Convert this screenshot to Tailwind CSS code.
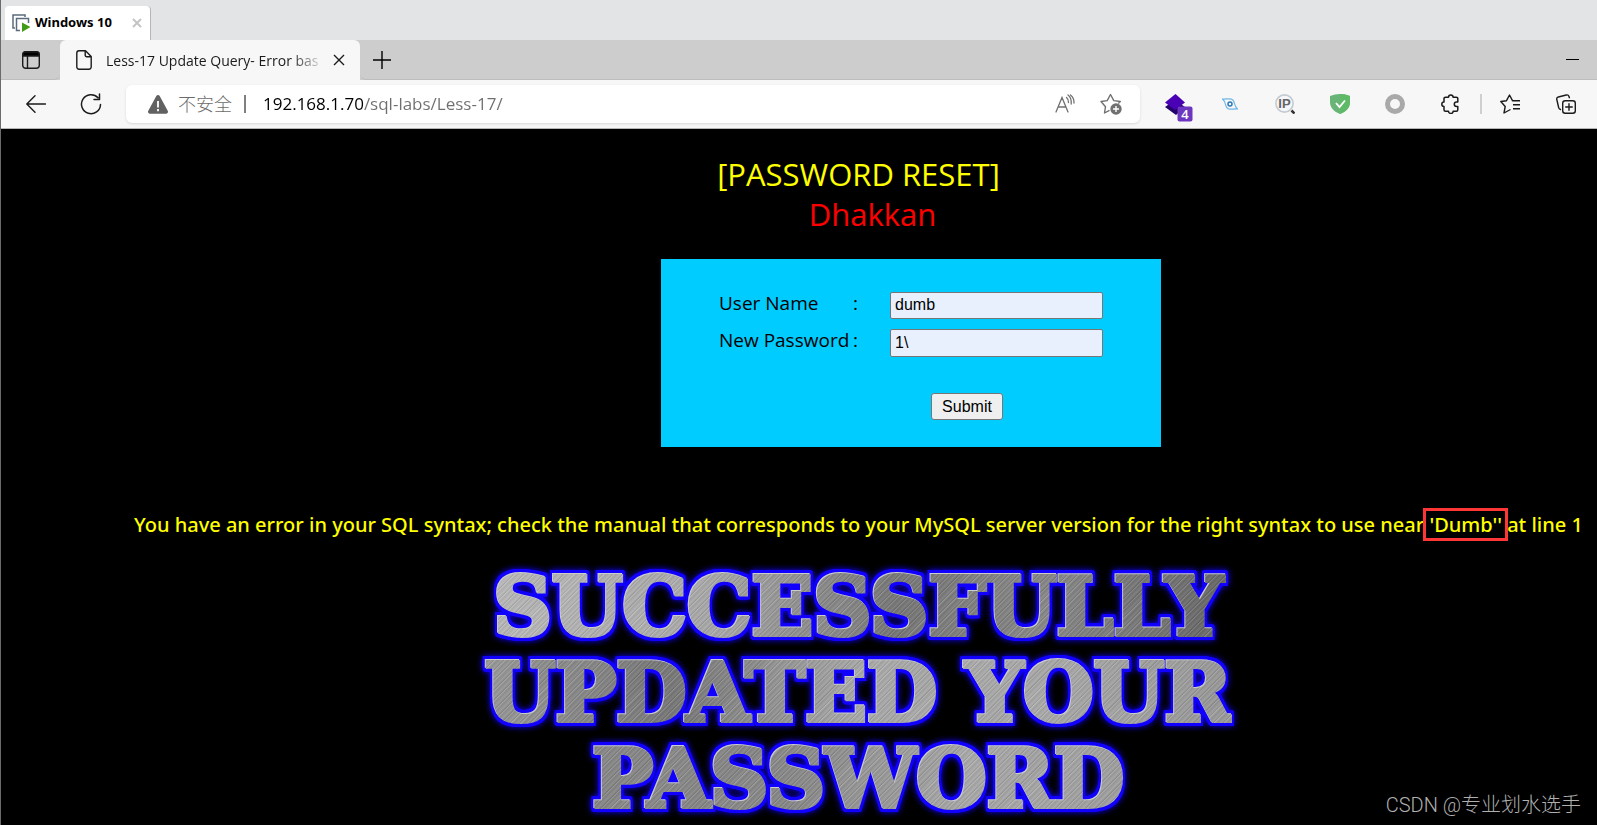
<!DOCTYPE html>
<html lang="zh-CN">
<head>
    <meta charset="UTF-8">
    <meta name="viewport" content="width=device-width, initial-scale=1.0">
    <title>Less-17 Update Query- Error based</title>
    <script src="https://cdn.jsdelivr.net/npm/@tailwindcss/browser@4"></script>
</head>
<body class="relative min-h-screen overflow-hidden border-l border-[#6b6b6b] bg-black font-['Open_Sans','Noto_Sans_CJK_SC',sans-serif]">
    <!-- VM tabs -->
    <div class="flex h-10 items-end bg-[#e3e4e6] pl-1">
        <div class="flex h-[34px] w-[146px] items-center rounded-t border-r border-[#b5b5b5] bg-white pl-[7px] pr-2">
            <svg class="h-[18px] w-[18px]" viewBox="0 0 18 18" fill="none" stroke="#5b6b7b" stroke-width="1.5">
                <path d="M3 14H1V1h12v2" />
                <path d="M8 16.500H4.500V4.500h12V9" />
                <path d="M10 8.500v9.500l8.500-5z" fill="#3f9c14" stroke="none" />
            </svg>
            <span class="ml-[5px] whitespace-nowrap font-['Noto_Sans',sans-serif] text-[13px] font-bold">Windows 10</span>
            <button class="ml-auto" aria-label="Close">
                <svg class="h-[10px] w-[10px]" viewBox="0 0 10 10" stroke="#c4c4c4" stroke-width="2"><path d="M1 1l8 8M9 1l-8 8" /></svg>
            </button>
        </div>
    </div>

    <!-- Browser tabs -->
    <div class="flex h-10 bg-[#cdcdcd]">
        <button class="flex w-[59px] items-center justify-center rounded-br-md border-b border-[#bdbdbd]" aria-label="Tab actions">
            <svg class="h-[18px] w-[18px]" viewBox="0 0 18 18" fill="none" stroke="#1b1b1b" stroke-width="1.4">
                <rect x="0.700" y="0.700" width="16.600" height="16.600" rx="3" />
                <path d="M1 3a2 2 0 012-2h12a2 2 0 012 2v2H1z" fill="#000" />
                <path d="M5.500 5v12" />
            </svg>
        </button>
        <div class="flex w-[300px] items-center rounded-t-md bg-[#f7f7f7] pl-4 pr-[15px]">
            <svg class="h-5 w-4" viewBox="0 0 16 20" fill="none" stroke="#1b1b1b" stroke-width="1.400" stroke-linejoin="round">
                <path d="M3 .8h6.500l5.700 5.700V17a2.200 2.200 0 01-2.200 2.200H3A2.200 2.200 0 01.800 17V3A2.200 2.200 0 013 .8z" />
                <path d="M9.200 1v4.300a1.500 1.500 0 001.500 1.500H15" />
            </svg>
            <span class="ml-[14px] whitespace-nowrap text-[14px] text-[#1b1b1b] [mask-image:linear-gradient(90deg,#000_185px,#0003_212px)]">Less-17 Update Query- Error bas</span>
            <button class="ml-auto" aria-label="Close tab">
                <svg class="h-3 w-3" viewBox="0 0 12 12" stroke="#1b1b1b" stroke-width="1.400"><path d="M1 1l10 10M11 1L1 11" /></svg>
            </button>
        </div>
        <div class="flex flex-1 items-center rounded-bl-md border-b border-[#bdbdbd] pl-[13px] pr-[18px]">
            <button aria-label="New tab">
                <svg class="h-[18px] w-[18px]" viewBox="0 0 18 18" stroke="#000" stroke-width="1.400"><path d="M9 0v18M0 9h18" /></svg>
            </button>
            <button class="ml-auto" aria-label="Minimize">
                <svg class="h-3 w-[13px]" viewBox="0 0 13 12" stroke="#000"><path d="M0 5.500h13" /></svg>
            </button>
        </div>
    </div>

    <!-- Toolbar -->
    <div class="flex h-[49px] items-center border-b border-[#b5b5b5] bg-[#f7f7f7] pr-1">
        <button class="ml-[25px]" aria-label="Back">
            <svg class="h-[18px] w-5" viewBox="0 0 20 18" fill="none" stroke="#1b1b1b" stroke-width="1.400" stroke-linecap="round" stroke-linejoin="round"><path d="M19.500 9H1M9 .8L.800 9 9 17.200" /></svg>
        </button>
        <button class="ml-[34px]" aria-label="Refresh">
            <svg class="h-[22px] w-[22px]" viewBox="0 0 22 22" fill="none" stroke="#1b1b1b" stroke-width="1.500" stroke-linecap="round" stroke-linejoin="round"><path d="M20.500 11.500A9.500 9.500 0 1118 4.800M19.500 1v5.500H14" /></svg>
        </button>
        <div class="ml-6 flex h-[38px] flex-1 items-center rounded-md bg-white pl-[22px] pr-[18px] text-[17px] text-[#6b6b6b] shadow-sm">
            <svg class="h-[19px] w-5" viewBox="0 0 20 19">
                <path d="M8.300 1a2 2 0 013.400 0l8 14.800a2 2 0 01-1.700 3H2a2 2 0 01-1.700-3z" fill="#616161" />
                <path d="M10 6v6.500M10 14v2.200" stroke="#fff" stroke-width="1.800" />
            </svg>
            <span class="ml-[10px] pb-[2px] font-['Noto_Sans_CJK_SC',sans-serif] text-[18px] font-light">不安全</span>
            <span class="ml-3 h-[18px] w-[2px] bg-[#808080]"></span>
            <input type="text" aria-label="Address" value="192.168.1.70/sql-labs/Less-17/" class="ml-[17px] min-w-0 flex-1 bg-[linear-gradient(90deg,#000_100px,#6f6f6f_100px)] bg-clip-text text-transparent outline-none">
            <button aria-label="Read aloud">
                <svg class="h-5 w-5" viewBox="0 0 20 20" fill="none" stroke="#707070" stroke-width="1.300" stroke-linecap="round"><path d="M1 18L7 3.500 13 18M3 13h8M11.500 3.500c1.500 1.200 2.200 3 2 5M13 1c2.700 2 3.600 5 3.200 9M15.500 1c2.600 2 3.700 4.500 3.500 8" /></svg>
            </button>
            <button class="ml-[25px]" aria-label="Add to favorites">
                <svg class="h-[22px] w-[22px]" viewBox="0 0 22 22" fill="none" stroke="#707070" stroke-width="1.400" stroke-linejoin="round">
                    <path d="M9.500 17.300L4.500 20l1-6.300L1 8.500l6.200-.9L10.500 1.500l3.300 6.100 6.500.9-2 2" />
                    <circle cx="16" cy="16" r="5.700" fill="#707070" stroke="none" />
                    <path d="M16 13v6M13 16h6" stroke="#fff" />
                </svg>
            </button>
        </div>
        <div class="ml-[7px] flex items-center">
            <button class="flex w-[55px] justify-center pl-2 pt-2" aria-label="Extension">
                <svg class="h-[28px] w-[28px]" viewBox="0 0 28 28">
                    <path d="M0 13l10-7 10 7-9 8z" fill="#23006b" />
                    <path d="M0 8.500L10.500 0 20 8.500 10 16z" fill="#4a00b4" />
                    <rect x="12.500" y="12.500" width="15" height="15" rx="2" fill="#6c36c0" />
                    <text x="20" y="25" text-anchor="middle" class="fill-white font-['Open_Sans'] text-[13px] font-semibold">4</text>
                </svg>
            </button>
            <button class="flex w-[55px] justify-center" aria-label="Extension">
                <svg class="h-3 w-4" viewBox="0 0 16 12" fill="none" stroke="#6fb6e6" stroke-width="1.200">
                    <path d="M.5 1c3.500.3 6-.6 9 .2 2 .6 2.500 1.800 3 4.300.4 2 1.200 4 3 5.500-3.500-.3-6 .6-9-.2-2-.6-2.500-1.800-3-4.300C3.100 4.500 2.300 2.500.5 1z" />
                    <circle cx="8" cy="6" r="2" stroke="#2e78b8" stroke-width="1.500" />
                </svg>
            </button>
            <button class="flex w-[55px] justify-center" aria-label="Extension">
                <svg class="h-5 w-5" viewBox="0 0 20 20" fill="none">
                    <circle cx="9.500" cy="9.500" r="8.600" fill="#f5f7f8" stroke="#c3cbd1" stroke-width="1.600" />
                    <path d="M16.500 16.500l3 3" stroke="#333" stroke-width="2.500" />
                    <text x="9.500" y="14" text-anchor="middle" class="fill-[#666] font-['Liberation_Sans'] text-[13px] font-bold">IP</text>
                </svg>
            </button>
            <button class="flex w-[55px] justify-center" aria-label="Extension">
                <svg class="h-5 w-5" viewBox="0 0 20 20" fill="none">
                    <path d="M0 2Q10-1.800 20 2v6c0 6-4 9.500-10 12C4 17.500 0 14 0 8z" fill="#68b577" />
                    <path d="M10 .1Q15 0 20 2v6c0 6-4 9.500-10 12z" fill="#5fba68" />
                    <path d="M6 9l3.500 4L15 6.500" stroke="#fff" stroke-width="1.800" />
                </svg>
            </button>
            <button class="flex w-[55px] justify-center" aria-label="Extension">
                <svg class="h-5 w-5" viewBox="0 0 20 20" fill="none"><circle cx="10" cy="10" r="7.500" stroke="#a9a9a9" stroke-width="5" /></svg>
            </button>
            <button class="flex w-[55px] justify-center" aria-label="Extensions">
                <svg class="h-5 w-[18px]" viewBox="0 0 18 20" fill="none" stroke="#1b1b1b" stroke-width="1.500" stroke-linejoin="round"><path d="M4.500 3.200h3a2.300 2.300 0 014.600 0h3.200a1.500 1.500 0 011.500 1.500v3.300h-1.300a2.200 2.200 0 000 4.400h1.300v3.300a1.500 1.500 0 01-1.500 1.500h-3.200a2.300 2.300 0 01-4.600 0h-3A1.500 1.500 0 013 15.700v-3.300a2.200 2.200 0 010-4.400V4.700a1.500 1.500 0 011.500-1.500z" /></svg>
            </button>
            <span class="ml-[3px] h-5 w-[2px] bg-[#cfcfcf]"></span>
            <button class="flex w-[56px] justify-center" aria-label="Favorites">
                <svg class="h-5 w-5" viewBox="0 0 20 20" fill="none" stroke="#1b1b1b" stroke-width="1.400" stroke-linejoin="round"><path d="M10.500 15.500L4 19l1.200-6.500L.800 7.500l5.700-.8L9.500 1l3 5.700H20M13 10.700h7M13 14.700h7" /></svg>
            </button>
            <button class="flex w-[55px] justify-center" aria-label="Collections">
                <svg class="h-5 w-5" viewBox="0 0 20 20" fill="none" stroke="#1b1b1b" stroke-width="1.400" stroke-linecap="round" stroke-linejoin="round">
                    <path d="M4.500 15.500A3 3 0 012.500 13L.800 5.500A2 2 0 012.300 3l8-2a2.300 2.300 0 012.700 1.500l.4 1.200" />
                    <rect x="6.700" y="6.700" width="12.600" height="12.600" rx="2.500" />
                    <path d="M13 9.700v6.600M9.700 13h6.600" />
                </svg>
            </button>
        </div>
    </div>

    <!-- Page -->
    <main class="flex flex-col items-center pl-[119px] pt-[25px] text-[#ffff00]">
        <h1 class="text-center text-[31px] leading-10">
            [PASSWORD RESET]<br>
            <span class="pl-7 text-[#ff0000]">Dhakkan</span>
        </h1>

        <form class="ml-[105px] mt-[25px] h-[188px] w-[500px] bg-[#00ccff] pl-[58px] pt-[33px] text-black" onsubmit="return false">
            <div class="flex h-[27px]">
                <label for="uname" class="flex w-[139px] justify-between text-[19px] leading-[23px]">User Name <span>:</span></label>
                <input id="uname" name="uname" type="text" value="dumb" class="ml-8 h-[27px] w-[213px] rounded-xs border border-[#767676] bg-[#e8f0fe] px-1 pb-[2px] font-['Liberation_Sans',sans-serif] text-[16px]">
            </div>
            <div class="mt-[10px] flex h-[28px]">
                <label for="passwd" class="flex w-[139px] justify-between whitespace-nowrap text-[19px] leading-[23px]">New Password <span>:</span></label>
                <input id="passwd" name="passwd" type="text" value="1\" class="ml-8 h-[28px] w-[213px] rounded-xs border border-[#767676] bg-[#e8f0fe] px-1 font-['Liberation_Sans',sans-serif] text-[16px]">
            </div>
            <button type="submit" class="ml-[212px] mt-9 h-[27px] w-[72px] rounded-[3px] border border-[#767676] bg-[#efefef] font-['Liberation_Sans',sans-serif] text-[16px]">Submit</button>
        </form>

        <p class="mt-[61px] whitespace-nowrap font-['Noto_Sans',sans-serif] text-[20px] font-medium leading-[34px]">You have an error in your SQL syntax; check the manual that corresponds to your MySQL server version for the right syntax to use near <span class="relative">'Dumb''<span class="absolute -inset-x-[6px] -inset-y-[3px] border-3 border-[#ff3636]"></span></span> at line 1</p>

        <!-- Result banner -->
        <div class="mt-[22px] text-center font-['DejaVu_Serif',serif] text-[81px] font-bold leading-[86px] [-webkit-text-stroke:4px_transparent] [filter:drop-shadow(-1px_-1px_0_#ccc)_drop-shadow(2px_0_0_#10f)_drop-shadow(-2px_0_0_#10f)_drop-shadow(0_3px_0_#10f)_drop-shadow(0_-3px_0_#10f)_drop-shadow(0_0_3px_#10f)]">
            <span class="block whitespace-nowrap bg-[repeating-linear-gradient(135deg,#fff3_0px,#0001_2px,#fff1_5px,#0002_7px),linear-gradient(90deg,#bbb,#aaa_30%,#777_55%,#888_75%,#666)] bg-clip-text text-transparent">SUCCESSFULLY</span>
            <span class="block whitespace-nowrap bg-[repeating-linear-gradient(135deg,#fff3_0px,#0001_2px,#fff1_5px,#0002_7px),linear-gradient(90deg,#999,#777_25%,#aaa_50%,#aaa_75%,#999)] bg-clip-text text-transparent">UPDATED YOUR</span>
            <span class="block whitespace-nowrap bg-[repeating-linear-gradient(135deg,#fff3_0px,#0001_2px,#fff1_5px,#0002_7px),linear-gradient(90deg,#888,#888_40%,#aaa_65%,#999)] bg-clip-text text-transparent">PASSWORD</span>
        </div>
    </main>

    <span class="absolute bottom-[5px] right-4 font-['Roboto','Noto_Sans_CJK_SC',sans-serif] text-[20px] font-light leading-[30px] text-[#b0b0b0]">CSDN @专业划水选手</span>
</body>
</html>
